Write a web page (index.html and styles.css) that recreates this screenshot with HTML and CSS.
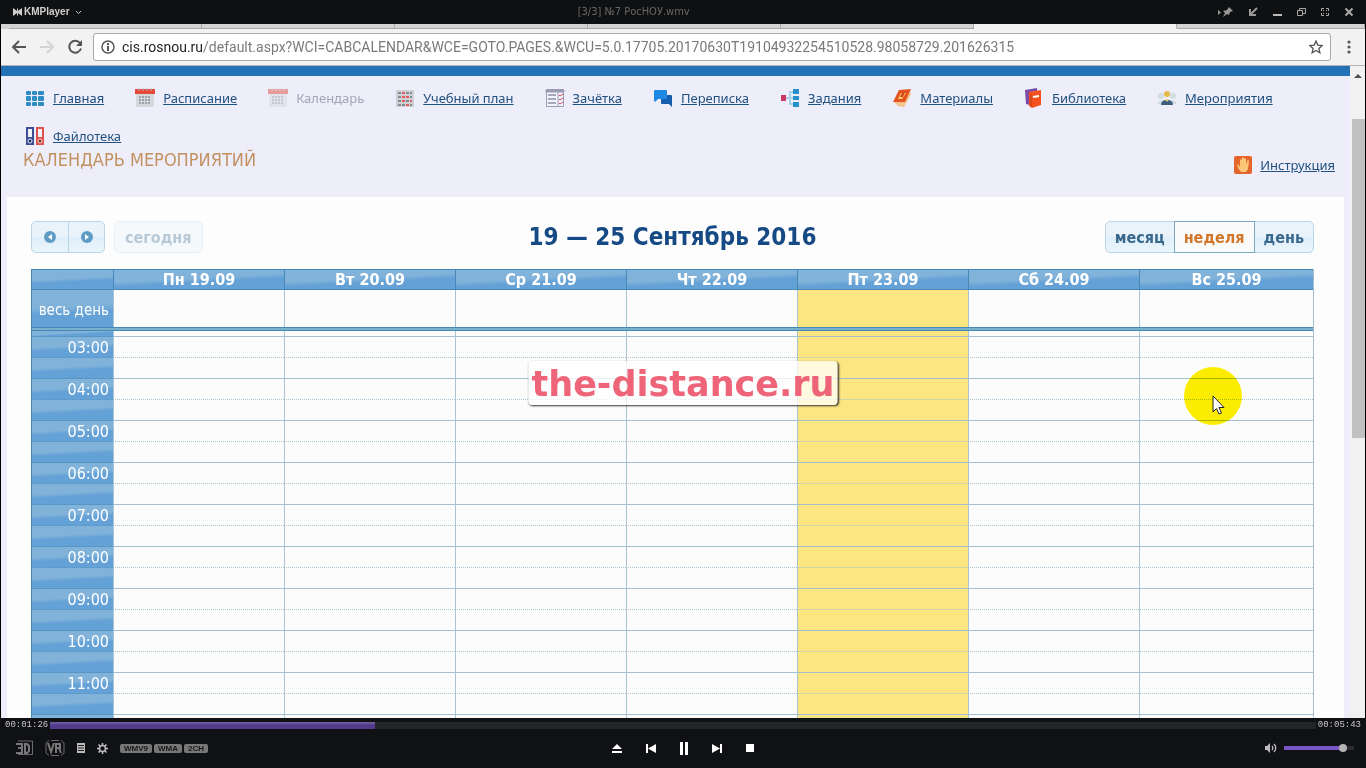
FILE: index.html
```html
<!DOCTYPE html>
<html lang="ru">
<head>
  <meta charset="UTF-8">
  <meta name="viewport" content="width=device-width, initial-scale=1.0">
  <title>KMPlayer</title>
  <link rel="stylesheet" href="styles.css">
</head>
<body>
  <!-- Player title bar -->
  <header class="titlebar">
    <button class="brand">
      <svg width="9" height="8" viewBox="0 0 9 8"><path d="M0 0L4 3V0L5 1V3L9 0V8L5 5V8L4 7V5L0 8Z" fill="#d0d0d0"/></svg>
      KMPlayer
      <svg class="chevron" width="7" height="5" viewBox="0 0 7 5"><path d="M1 1L3.500 3.500L6 1" fill="none" stroke="#c8c8c8"/></svg>
    </button>
    <div class="file-name">[3/3] №7 РосНОУ.wmv</div>
    <div class="window-buttons">
      <button aria-label="Поверх окон"><svg width="16" height="12" viewBox="0 0 16 12"><path d="M0 4L3 6.500L0 9Z" fill="#999"/><path d="M11 1L15 5L12 6L11 9L9 8L5 11L7 7L5 5L9 4Z" fill="#999"/></svg></button>
      <button aria-label="Мини"><svg width="10" height="10" viewBox="0 0 10 10"><path d="M9 1L3 7M2 2V8H8" fill="none" stroke="#999" stroke-width="2"/></svg></button>
      <button aria-label="Свернуть"><svg width="10" height="10" viewBox="0 0 10 10"><path d="M1 8H10" stroke="#bbb" stroke-width="2"/></svg></button>
      <button aria-label="Окно"><svg width="10" height="10" viewBox="0 0 10 10"><path d="M3.500 3V1.500H9.500V6.500H7M1.500 3.500H6.500V8.500H1.500Z" fill="none" stroke="#aaa"/></svg></button>
      <button aria-label="Во весь экран"><svg width="10" height="10" viewBox="0 0 10 10"><path d="M1.500 4V1.500H4M6 1.500H8.500V4M8.500 6V8.500H6M4 8.500H1.500V6M3 3L4 4M7 3L6 4M3 7L4 6M7 7L6 6" fill="none" stroke="#aaa"/></svg></button>
      <button aria-label="Закрыть"><svg width="10" height="10" viewBox="0 0 10 10"><path d="M1.500 1.500L8.500 8.500M8.500 1.500L1.500 8.500" stroke="#aaa" stroke-width="2"/></svg></button>
    </div>
  </header>

  <!-- Video picture -->
  <main class="video">
    <div class="tabs"><span></span><span></span><span></span><span></span><span></span><span class="active"></span><span class="rest"></span></div>
    <div class="toolbar">
      <button aria-label="Назад"><svg width="16" height="16" viewBox="0 0 16 16"><path d="M15 8H2M8 2L2 8L8 14" fill="none" stroke="#555" stroke-width="2"/></svg></button>
      <button aria-label="Вперёд"><svg width="16" height="16" viewBox="0 0 16 16"><path d="M1 8H14M8 2L14 8L8 14" fill="none" stroke="#d4d4d4" stroke-width="2"/></svg></button>
      <button aria-label="Обновить"><svg width="16" height="16" viewBox="0 0 16 16"><path d="M13 4A6 6 0 1 0 14 9.500" fill="none" stroke="#555" stroke-width="2"/><path d="M15 1V7H9Z" fill="#555"/></svg></button>
      <div class="address">
        <svg width="14" height="14" viewBox="0 0 14 14"><circle cx="7" cy="7" r="6" fill="none" stroke="#555" stroke-width="1.500"/><path d="M7 6V11M7 3V5" stroke="#555" stroke-width="2"/></svg>
        <div class="url"><b>cis.rosnou.ru</b>/default.aspx?WCI=CABCALENDAR&amp;WCE=GOTO.PAGES.&amp;WCU=5.0.17705.20170630T19104932254510528.98058729.201626315</div>
        <svg width="14" height="14" viewBox="0 0 14 14"><path d="M7 1L8.800 5.100L13.200 5.500L9.900 8.500L10.900 12.800L7 10.500L3.100 12.800L4.100 8.500L.8 5.500L5.200 5.100Z" fill="none" stroke="#555" stroke-width="1.300"/></svg>
      </div>
      <button aria-label="Меню"><svg width="4" height="14" viewBox="0 0 4 14"><g fill="#555"><circle cx="2" cy="2" r="1.600"/><circle cx="2" cy="7" r="1.600"/><circle cx="2" cy="12" r="1.600"/></g></svg></button>
    </div>

    <div class="browser">
      <div class="site">
        <div class="site-strip"></div>
        <nav class="menu">
          <a href="#"><svg width="20" height="20" viewBox="0 0 20 20"><g fill="#2f8cc4"><rect x="1" y="3" width="5" height="4" rx="1"/><rect x="7" y="3" width="5" height="4" rx="1"/><rect x="13" y="3" width="6" height="4" rx="1"/><rect x="1" y="8" width="5" height="5" rx="1"/><rect x="7" y="8" width="5" height="5" rx="1"/><rect x="13" y="8" width="6" height="5" rx="1"/><rect x="1" y="14" width="5" height="4" rx="1"/><rect x="7" y="14" width="5" height="4" rx="1"/><rect x="13" y="14" width="6" height="4" rx="1"/></g></svg><span>Главная</span></a>
          <a href="#"><svg width="20" height="20" viewBox="0 0 20 20"><path d="M1 5h18v14H1z" fill="#d5d8dc"/><path d="M0 1h20v5H0z" fill="#e2493b"/><path d="M4 0v3M8 0v3M12 0v3M16 0v3" stroke="#b8c0c8"/><path d="M4 9h12M4 12h12M4 15h12" stroke="#9aa2aa" stroke-width="2" stroke-dasharray="2 1"/></svg><span>Расписание</span></a>
          <a class="current"><svg width="20" height="20" viewBox="0 0 20 20"><path d="M1 5h18v14H1z" fill="#d5d8dc"/><path d="M0 1h20v5H0z" fill="#e2493b"/><path d="M4 0v3M8 0v3M12 0v3M16 0v3" stroke="#b8c0c8"/><path d="M4 9h12M4 12h12M4 15h12" stroke="#9aa2aa" stroke-width="2" stroke-dasharray="2 1"/></svg><span>Календарь</span></a>
          <a href="#"><svg width="20" height="20" viewBox="0 0 20 20"><path d="M1 2h18v17H1z" fill="#cdd0d4"/><path d="M3 5h14M3 9h14M3 13h14M3 17h14" stroke="#858d8f" stroke-width="2" stroke-dasharray="3 1"/><path d="M7 5h3M11 9h3M7 13h3M11 17h3M15 13h2M7 9h3" stroke="#e45d5d" stroke-width="2"/></svg><span>Учебный план</span></a>
          <a href="#"><svg width="20" height="20" viewBox="0 0 20 20"><path d="M1.500 1.500h17v17h-17z" fill="#f4f4fc" stroke="#9b9bb5"/><path d="M1 2h18v2H1zM13 2v16" stroke="#9b9bb5" fill="#9b9bb5"/><path d="M3 7h8M3 11h8M3 15h8" stroke="#5a5a80"/><path d="M14 7l1 1 3-2M14 11l1 1 3-2M14 15l1 1 3-2" stroke="#c84b62" fill="none"/></svg><span>Зачётка</span></a>
          <a href="#"><svg width="20" height="20" viewBox="0 0 20 20"><path d="M8 7h10q1 0 1 1v11l-3-3H9q-1 0-1-1z" fill="#155fae"/><path d="M2 2h11q1 0 1 1v7q0 1-1 1H5l-3 3q-1-1-1-2V3q0-1 1-1z" fill="#1e88e5"/></svg><span>Переписка</span></a>
          <a href="#"><svg width="20" height="20" viewBox="0 0 20 20"><path d="M6 10h8M14 4h-4v12h4" stroke="#a6d2ec" fill="none" stroke-width="2"/><path d="M1 7h5v6H1z" fill="#cb3a67"/><path d="M13 1h6v5h-6zM13 8h6v4h-6zM13 14h6v5h-6z" fill="#278fc9"/></svg><span>Задания</span></a>
          <a href="#"><svg width="20" height="20" viewBox="0 0 20 20"><path d="M2 14l4 4 6 1 7-13-2-4z" fill="#f5c28b"/><path d="M7 2l12-1-6 13H1z" fill="#e4531f"/><path d="M9 5h5l-4 6H6z" fill="#fbc96c"/><path d="M10 5l-2 4h3l2-5" fill="#d9431a"/></svg><span>Материалы</span></a>
          <a href="#"><svg width="20" height="20" viewBox="0 0 20 20"><path d="M1 2l12-2v3L6 4v13l-4-1z" fill="#7a4aa4"/><path d="M5 4l12-2v15L8 20l-3-2z" fill="#f4511e"/><path d="M7 6v12" stroke="#c63c10"/><path d="M9 9l6-1" stroke="#fff" stroke-width="2"/></svg><span>Библиотека</span></a>
          <a href="#"><svg width="20" height="20" viewBox="0 0 20 20"><g fill="#d1dde2"><circle cx="4" cy="8" r="3"/><circle cx="16" cy="8" r="3"/><path d="M0 16q4-7 10-2q6-5 10 2z"/></g><circle cx="10" cy="6" r="3" fill="#e7b84b"/><path d="M4 17q0-5 6-5t6 5z" fill="#3f5d7d"/><path d="M8 11h4l-2 3z" fill="#f4d28d"/></svg><span>Мероприятия</span></a>
          <a href="#"><svg width="20" height="20" viewBox="0 0 20 20"><path d="M1 1h8v18H1z" fill="#3d4f94"/><path d="M11 1h8v18h-8z" fill="#df514c"/><path d="M3 3h4v8H3zM13 3h4v8h-4z" fill="#f1f3fa"/><circle cx="5" cy="15" r="2" fill="#25346b" stroke="#e4e7f5"/><circle cx="15" cy="15" r="2" fill="#931d1d" stroke="#f6e4e4"/></svg><span>Файлотека</span></a>
        </nav>
        <div class="page-head">
          <h1>КАЛЕНДАРЬ МЕРОПРИЯТИЙ</h1>
          <a class="help" href="#"><svg width="18" height="18" viewBox="0 0 18 18"><rect width="18" height="18" rx="2" fill="#e5642c"/><path d="M7 16Q4 13 3 9l1-1 2 3V4l1-1 1 1v4V2l1-1 1 1v6V3l1-1 1 1v6l1-4 1-1 1 1-1 8-2 3z" fill="#fcc777"/></svg><span>Инструкция</span></a>
        </div>

        <section class="calendar">
          <div class="calendar-bar">
            <div class="left">
              <div class="group arrows">
                <button aria-label="Предыдущая неделя"><svg width="12" height="12" viewBox="0 0 12 12"><circle cx="6" cy="6" r="6" fill="#5f9cc5"/><path d="M8 3V9L4 6Z" fill="#fff"/></svg></button>
                <button aria-label="Следующая неделя"><svg width="12" height="12" viewBox="0 0 12 12"><circle cx="6" cy="6" r="6" fill="#5f9cc5"/><path d="M4 3V9L8 6Z" fill="#fff"/></svg></button>
              </div>
              <div class="group"><button class="today" disabled>сегодня</button></div>
            </div>
            <h2>19 — 25 Сентябрь 2016</h2>
            <div class="group views">
              <button>месяц</button>
              <button class="selected">неделя</button>
              <button>день</button>
            </div>
          </div>
          <table>
            <colgroup><col class="time-col"><col class="day-col" span="6"><col></colgroup>
            <thead>
              <tr><th></th><th>Пн 19.09</th><th>Вт 20.09</th><th>Ср 21.09</th><th>Чт 22.09</th><th>Пт 23.09</th><th>Сб 24.09</th><th>Вс 25.09</th></tr>
            </thead>
            <tbody id="slots">
              <tr class="all-day"><th>весь день</th><td></td><td></td><td></td><td></td><td class="now"></td><td></td><td></td></tr>
              <tr class="divider"><td colspan="8"></td></tr>
              <tr class="cut"><th></th><td></td><td></td><td></td><td></td><td class="now"></td><td></td><td></td></tr>
            </tbody>
          </table>
        </section>
      </div>
      <div class="scrollbar"><i class="up"></i><div class="thumb"></div></div>
    </div>

    <div class="watermark">the-distance.ru</div>
    <div class="spot"></div>
    <svg class="pointer" width="14" height="20" viewBox="0 0 14 20"><path d="M1 1V17L4.500 13.500L7 19L9.500 18L7 12.500H12Z" fill="#fff" stroke="#222"/></svg>
  </main>

  <!-- Player controls -->
  <footer class="player">
    <div class="seek">
      <span>00:01:26</span>
      <div class="track"><div class="played"></div></div>
      <span>00:05:43</span>
    </div>
    <div class="controls">
      <div class="modes">
        <button aria-label="3D"><svg width="18" height="16" viewBox="0 0 18 16"><path d="M3 1H17.500V14.500H3" fill="none" stroke="#6b6b6b"/><path d="M1 4H7V13H1M3 8H7M10 4H12L14 6V11L12 13H10Z" fill="none" stroke="#777" stroke-width="2"/></svg></button>
        <button aria-label="VR"><svg width="20" height="16" viewBox="0 0 20 16"><path d="M4 .5L1 3V13L4 15.500M16 .5L19 3V13L16 15.500M6 .5H14M6 15.500H14" fill="none" stroke="#6b6b6b"/><path d="M3 3L6 12L9 3M11 13V4H15V8H11M14 8L16 13" fill="none" stroke="#777" stroke-width="2"/></svg></button>
        <button aria-label="Список"><svg width="8" height="10" viewBox="0 0 8 10"><path d="M0 0h8v10H0z" fill="#bbb"/><path d="M1 2.500h6M1 5h6M1 7.500h6" stroke="#222"/></svg></button>
        <button aria-label="Настройки"><svg width="11" height="11" viewBox="0 0 11 11"><circle cx="5.500" cy="5.500" r="3" fill="none" stroke="#bbb" stroke-width="1.600"/><path d="M5.500 0v2M5.500 9v2M0 5.500h2M9 5.500h2M1.500 1.500l1.500 1.500M8 8l1.500 1.500M9.500 1.500L8 3M3 8L1.500 9.500" stroke="#bbb" stroke-width="1.600"/></svg></button>
        <div class="codecs"><span>WMV9</span><span>WMA</span><span>2CH</span></div>
      </div>
      <div class="transport">
        <button aria-label="Открыть"><svg width="10" height="9" viewBox="0 0 10 9"><path d="M5 0L10 5H0ZM0 7H10V9H0Z" fill="#fff"/></svg></button>
        <button aria-label="Назад"><svg width="10" height="9" viewBox="0 0 10 9"><path d="M0 0H2V9H0ZM10 0V9L2 4.500Z" fill="#fff"/></svg></button>
        <button aria-label="Пауза"><svg width="8" height="13" viewBox="0 0 8 13"><path d="M0 0H3V13H0ZM5 0H8V13H5Z" fill="#fff"/></svg></button>
        <button aria-label="Далее"><svg width="10" height="9" viewBox="0 0 10 9"><path d="M8 0H10V9H8ZM0 0V9L8 4.500Z" fill="#fff"/></svg></button>
        <button aria-label="Стоп"><svg width="8" height="8" viewBox="0 0 8 8"><path d="M0 0H8V8H0Z" fill="#fff"/></svg></button>
      </div>
      <div class="volume">
        <button aria-label="Звук"><svg width="12" height="10" viewBox="0 0 12 10"><path d="M0 3H2L5 0V10L2 7H0Z" fill="#bbb"/><path d="M7 3Q8.500 5 7 7M9 1Q12.500 5 9 9" fill="none" stroke="#bbb" stroke-width="1.300"/></svg></button>
        <input type="range" min="0" max="100" value="89" aria-label="Громкость">
      </div>
    </div>
  </footer>

  <script>
    // Two half-hour rows for each hour; the last hour is cut by the player
    const labels = ['03:00', '04:00', '05:00', '06:00', '07:00', '08:00', '09:00', '10:00', '11:00', ''];
    const slots = document.getElementById('slots');

    function addRow(className, label) {
      const row = document.createElement('tr');
      row.className = className;
      let cells = '<th>' + label + '</th>';
      for (let day = 0; day < 7; day++) {
        cells += day === 4 ? '<td class="now"></td>' : '<td></td>';
      }
      row.innerHTML = cells;
      slots.appendChild(row);
    }

    labels.forEach(function(label) {
      addRow('hour', label);
      addRow('half', '');
    });
  </script>
</body>
</html>
```
FILE: styles.css
```css
* {
  box-sizing: border-box;
}

body {
  margin: 0;
  height: 100vh;
  display: flex;
  flex-direction: column;
  overflow: hidden;
  background: #000;
  font-family: "DejaVu Sans Condensed", "DejaVu Sans", sans-serif;
}

button {
  padding: 0;
  border: 0;
  background: none;
  font-family: inherit;
  display: flex;
  align-items: center;
  justify-content: center;
}

svg {
  flex: none;
}

/* Player title bar */
.titlebar {
  height: 24px;
  flex: none;
  display: grid;
  grid-template-columns: 17fr auto 20fr;
  align-items: center;
  padding: 0 12px 0 13px;
  background: #0f1011;
}

.brand {
  justify-self: start;
  gap: 2px;
  color: #d0d0d0;
  font: bold 10px/12px "Liberation Sans", sans-serif;
}

.chevron {
  margin-left: 3px;
}

.file-name {
  color: #686868;
  font-size: 11px;
  line-height: 24px;
}

.window-buttons {
  display: flex;
  justify-content: flex-end;
  gap: 14px;
}

/* Browser chrome */
.video {
  flex: 1;
  min-height: 0;
  display: flex;
  flex-direction: column;
  position: relative;
  margin: 0 1px;
  overflow: hidden;
}

.tabs {
  height: 5px;
  flex: none;
  display: flex;
  padding-left: 8px;
  background: #d4d2d2;
}

.tabs span {
  width: 193px;
  border-bottom: 1px solid #aaa;
  border-right: 1px solid #aaa;
}

.tabs .active {
  width: 203px;
  background: #f2f2f2;
  border-bottom-color: #f2f2f2;
}

.tabs .rest {
  flex: 1;
}

.toolbar {
  height: 37px;
  flex: none;
  display: flex;
  align-items: center;
  gap: 12px;
  padding: 0 14px 0 10px;
  background: #f2f2f2;
  border-bottom: 1px solid #b6b4b2;
}

.address {
  flex: 1;
  height: 28px;
  display: flex;
  align-items: center;
  gap: 7px;
  margin: 0 4px 0 -2px;
  padding: 0 7px;
  border: 1px solid #a9a9a9;
  border-radius: 3px;
  background: #fff;
}

.url {
  flex: 1;
  color: #7a7a7a;
  font-family: Roboto, sans-serif;
  font-size: 14px;
  line-height: 20px;
  white-space: nowrap;
}

.url b {
  color: #222;
  font-weight: normal;
}

.browser {
  flex: 1;
  min-height: 0;
  display: flex;
}

.site {
  flex: 1;
  min-width: 0;
  overflow: hidden;
  background: #eeeefb;
}

.site-strip {
  height: 10px;
  background: #2372b8;
}

.scrollbar {
  width: 15px;
  flex: none;
  background: #f1f1f1;
}

.up {
  display: block;
  width: 8px;
  margin: 8px auto 41px;
  border: 4px solid transparent;
  border-top: 0;
  border-bottom-color: #505050;
}

.thumb {
  height: 49%;
  margin-left: 2px;
  background: #c1c1c1;
}

/* Site menu */
.menu {
  display: flex;
  flex-wrap: wrap;
  column-gap: 31px;
  row-gap: 18px;
  padding: 12px 24px 0;
}

.menu a,
.help {
  display: flex;
  align-items: center;
  gap: 8px;
  color: #20507f;
  font-family: "Noto Sans", sans-serif;
  font-size: 13px;
  line-height: 20px;
}

.menu .current {
  color: #a4a4b4;
}

.current svg {
  opacity: 0.5;
}

.page-head {
  display: flex;
  justify-content: space-between;
  height: 51px;
  padding: 4px 15px 0 22px;
}

h1 {
  margin: 0;
  color: #c2915f;
  font-size: 18px;
  line-height: 20px;
  font-weight: normal;
}

.help {
  height: 30px;
}

/* Calendar */
.calendar {
  margin: 0 6px;
  padding: 24px 30px 0 24px;
  background: #fdfdfe;
}

.calendar-bar {
  display: grid;
  grid-template-columns: 1fr auto 1fr;
  align-items: center;
  margin-bottom: 16px;
}

.left {
  display: flex;
  gap: 9px;
}

.group {
  display: flex;
  height: 32px;
  border: 1px solid #b9d6e8;
  border-radius: 5px;
  background: linear-gradient(#eaf3fa 50%, #dfeefa 50%, #eaf5fb);
}

.group button {
  padding: 0 9px;
  color: #3a698e;
  font-size: 16px;
  font-weight: bold;
}

.arrows button {
  width: 36px;
}

.arrows button + button {
  border-left: 1px solid #b9d6e8;
}

.group .today {
  padding: 0 10px;
  color: #3a698e;
}

.group:has(.today) {
  opacity: 0.35;
}

.views {
  justify-self: end;
}

.views .selected {
  margin: -1px 0;
  border: 1px solid #7ba9c4;
  background: #fbfafa;
  color: #d2772a;
}

h2 {
  margin: 0;
  color: #154a84;
  font-size: 24px;
  line-height: 30px;
}

table {
  width: 100%;
  table-layout: fixed;
  border-spacing: 0;
  border-right: 1px solid #a4bfd0;
}

.time-col {
  width: 82px;
}

.day-col {
  width: 171px;
}

th,
td {
  padding: 0;
  border: 0 solid #a8c4d3;
}

td {
  border-left-width: 1px;
  background: #fcfcfd;
}

th {
  background: linear-gradient(177deg, #80b2da 45%, #64a1d6 60%);
  border-color: #4687b6;
  color: #fff;
  font-size: 16px;
  line-height: 19px;
}

thead th {
  height: 21px;
  border-width: 1px 0 1px 1px;
}

tbody th {
  padding-right: 4px;
  border-left-width: 1px;
  font-weight: normal;
  text-align: right;
}

.all-day th {
  padding-top: 3px;
  font-size: 15px;
  white-space: nowrap;
}

td.now {
  background: #fde581;
}

.all-day > * {
  height: 37px;
}

.divider td {
  height: 4px;
  border: 1px solid #4687b6;
  border-right: 0;
  background: #79b0cb;
}

.cut > * {
  height: 5px;
}

.hour > *,
.half > * {
  height: 21px;
  border-top-width: 1px;
}

.half > * {
  border-top-style: dotted;
}

.hour td {
  border-top-color: #a4bfd0;
}

.hour th,
.half th {
  border-top-color: #5795c4;
}

/* Over the picture */
.watermark {
  position: absolute;
  left: 50%;
  top: 337px;
  transform: translateX(-50%);
  padding: 2px 3px 0;
  border-radius: 4px;
  background: rgba(255, 255, 255, 0.75);
  box-shadow: 1px 1px 2px #333;
  color: #ee6579;
  font: bold 35px/42px "DejaVu Sans", sans-serif;
}

.spot {
  position: absolute;
  right: 123px;
  top: 343px;
  width: 58px;
  height: 58px;
  border-radius: 50%;
  background: #fff000;
  mix-blend-mode: multiply;
}

.pointer {
  position: absolute;
  right: 139px;
  top: 371px;
}

/* Player controls */
.player {
  height: 50px;
  flex: none;
  background: #101114;
}

.seek {
  height: 14px;
  display: flex;
  align-items: center;
  gap: 2px;
  padding: 0 5px;
  color: #c8c8c8;
  font: 9px/12px "Liberation Mono", monospace;
}

.track {
  flex: 1;
  height: 7px;
  background: #242527;
}

.played {
  width: 25.7%;
  height: 100%;
  background: linear-gradient(#6a579c 20%, #533a8d 40%);
}

.controls {
  display: grid;
  grid-template-columns: 1fr auto 1fr;
  align-items: center;
  height: 32px;
  padding: 0 12px 0 15px;
}

.modes,
.transport,
.volume {
  display: flex;
  align-items: center;
}

.modes {
  gap: 12px;
}

.codecs {
  display: flex;
  gap: 2px;
}

.codecs span {
  padding: 0 4px;
  border-radius: 2px;
  background: #777;
  color: #17181a;
  font: bold 8px/9px "Liberation Sans", sans-serif;
}

.transport {
  gap: 24px;
  margin-right: 4px;
}

.volume {
  justify-content: flex-end;
  gap: 7px;
}

.volume input {
  width: 70px;
  height: 10px;
  margin: 0;
  appearance: none;
  border-radius: 3px;
  background: linear-gradient(90deg, #7656c4 89%, #2c2c30 89%) center / 100% 4px no-repeat;
}

.volume input::-webkit-slider-thumb {
  appearance: none;
  width: 8px;
  height: 8px;
  border-radius: 50%;
  background: #b4b4b4;
}
```
